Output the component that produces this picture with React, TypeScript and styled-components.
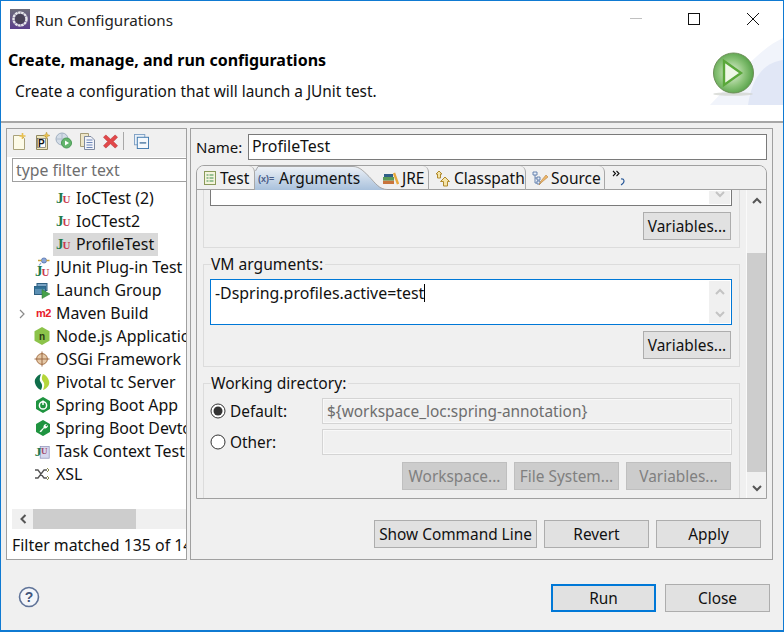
import React from 'react';
import styled, { createGlobalStyle } from 'styled-components';

const Global = createGlobalStyle`
  html, body { margin: 0; padding: 0; background: #f0f0f0; }
  * { box-sizing: border-box; }
`;

const Win = styled.div`
  width: 784px; height: 632px; overflow: hidden; display: flex; flex-direction: column;
  border: 1px solid #0f7ad2; border-bottom-width: 2px; background: #f0f0f0;
  font-family: "Noto Sans", "Open Sans", sans-serif; font-size: 15px; color: #111;
`;
const TitleBar = styled.div`
  height: 30px; flex: none; background: #fff; display: flex; align-items: center; padding: 6px 0 0 9px;
`;
const TitleText = styled.div`margin: 2px 0 0 5px; flex: 1; line-height: 20px; color: #222; font-size: 15.2px;`;
const WinControls = styled.div`display: flex; align-items: center; padding-right: 24px; gap: 46px;`;
const CloseGlyph = styled.svg`margin-left: 1px;`;
const Banner = styled.div`
  height: 92px; flex: none; background: #fff; border-bottom: 2px solid #a6a6a6; position: relative; padding: 0 0 0 7px;
`;
const BannerTitle = styled.div`font-weight: 700; font-size: 16px; line-height: 20px; margin-top: 19px; color: #000;`;
const BannerSub = styled.div`margin: 12px 0 0 7px; line-height: 20px; color: #111; font-size: 15.4px;`;
const BannerArt = styled.svg`position: absolute; right: 0; top: 6px;`;

const Body = styled.div`
  height: 437px; flex: none; display: flex; padding: 5px 10px 0 5px; gap: 3px;
`;
const Left = styled.div`
  width: 181px; flex: none; border: 1px solid #a0a0a0; background: #fff; display: flex; flex-direction: column; overflow: hidden;
`;
const Toolbar = styled.div`
  height: 28px; flex: none; background: #f0f0f0; display: flex; align-items: center; padding: 0 0 4px 5px;
`;
const ToolSlot = styled.span<{ $ml: number }>`display: inline-flex; flex: none; margin-left: ${p => p.$ml}px;`;
const ToolSep = styled.div`width: 1px; height: 18px; background: #a8a8a8; margin-left: 5px;`;
const FilterInput = styled.div`
  height: 24px; flex: none; margin: 1px -2px 0 5px; border: 1px solid #a0a0a0; background: #fff; color: #6e6e6e; padding-left: 3px; line-height: 23px; font-size: 15.8px;
`;
const Tree = styled.div`flex: 1; padding-top: 5px; min-height: 0; font-size: 15.9px;`;
const Row = styled.div<{ $level: number; $sel?: boolean }>`
  height: 23px; display: flex; align-items: center; white-space: nowrap; overflow: hidden; position: relative;
  padding: 0 0 2px ${p => (p.$level === 2 ? 46 : 26)}px; gap: 5px;
  ${p => (p.$sel ? 'margin-right: 28px; background: linear-gradient(90deg, #fff 46px, #d9d9d9 46px);' : '')}
`;
const IconBox = styled.span`width: 18px; height: 18px; flex: none; display: inline-flex; align-items: center; justify-content: center;`;
const Twist = styled.svg`position: absolute; left: 11px; top: 7px;`;
const HScroll = styled.div`
  height: 20px; flex: none; margin-left: 5px; background: #f0f0f0; display: flex; align-items: center;
`;
const HArrow = styled.div`width: 21px; height: 20px; display: flex; align-items: center; justify-content: center;`;
const HThumb = styled.div`width: 103px; height: 20px; background: #cdcdcd;`;
const FilterCount = styled.div`height: 30px; flex: none; padding: 6px 0 0 5px; white-space: nowrap; line-height: 21px; font-size: 15.9px;`;

const Right = styled.div`
  flex: 1; min-width: 0; border: 1px solid #a0a0a0; background: #f0f0f0; display: flex; flex-direction: column; padding: 0 5px 0 5px;
`;
const NameRow = styled.div`display: flex; align-items: center; height: 26px; margin-top: 5px; flex: none;`;
const NameLabel = styled.div`width: 52px; flex: none;`;
const NameInput = styled.div`flex: 1; height: 26px; border: 1px solid #7a7a7a; background: #fff; padding-left: 3px; line-height: 23px; font-size: 15.9px;`;
const Folder = styled.div`
  margin-top: 5px; height: 334px; flex: none; border: 1px solid #a0a0a0; border-radius: 8px 8px 0 0; display: flex; flex-direction: column; overflow: hidden; background: #f0f0f0;
`;
const TabBar = styled.div`
  height: 24px; flex: none; display: flex; border-bottom: 1px solid #a0a0a0; background: #f0f0f0; position: relative; font-size: 15.5px;
`;
const Tab = styled.div<{ $w: number; $pl?: number; $ml?: number }>`
  width: ${p => p.$w}px; flex: none; display: flex; align-items: center; gap: 3px; padding: 0 0 0 ${p => p.$pl ?? 6}px; white-space: nowrap; height: 24px;
  margin-left: ${p => p.$ml ?? 0}px;
  border-right: 1px solid #a8a8a8; border-top-right-radius: 6px;
`;
const ActiveWrap = styled.div`width: 132px; height: 24px; flex: none; position: relative;`;
const ActiveTab = styled.div`
  width: 132px; display: flex; align-items: center; gap: 3px; padding: 0 0 0 3px; height: 24px; white-space: nowrap;
  background: linear-gradient(180deg, #eef2f7 0%, #a9c1dc 100%);
  clip-path: polygon(0 3px, 3px 0, 98px 0, 104px 2px, 112px 8px, 118px 15px, 125px 21px, 132px 24px, 0 24px);
`;
const ActiveEdge = styled.svg`position: absolute; left: 0; top: 0;`;
const ChevronMore = styled.div`margin-left: 7px; padding-top: 3px;`;
const FolderBody = styled.div`flex: 1; min-height: 0; display: flex; overflow: hidden;`;
const Scrolled = styled.div`flex: 1; min-width: 0; padding: 0 6px 0 6px; overflow: hidden; font-size: 15.4px;`;
const VBar = styled.div`
  width: 20px; flex: none; display: flex; flex-direction: column; align-items: center; justify-content: space-between; background: #f0f0f0; border-left: 1px solid #fafafa;
`;
const VArrow = styled.div`height: 20px; display: flex; align-items: center; justify-content: center;`;
const VThumb = styled.div`width: 19px; height: 219px; background: #cdcdcd; margin-top: 43px; margin-bottom: 6px;`;

const Group = styled.div<{ $h: number; $clip?: boolean }>`
  height: ${p => p.$h}px; border: 1px solid #dcdcdc; position: relative; padding: 14px 7px 0 7px; margin-bottom: 16px;
  ${p => (p.$clip ? 'border-top: 0; padding-top: 0;' : '')}
`;
const Legend = styled.div`position: absolute; top: -10px; left: 7px; line-height: 19px; background: #f0f0f0; padding-right: 2px; font-size: 15.6px;`;
const TextArea = styled.div<{ $focus?: boolean; $h: number; $clip?: boolean }>`
  height: ${p => p.$h}px; background: #fff; border: 1px solid ${p => (p.$focus ? '#0078d7' : '#7a7a7a')}; ${p => (p.$clip ? 'border-top: 0;' : '')}
  display: flex; padding: 1px; margin-left: -1px;
`;
const TextValue = styled.div`flex: 1; padding: 1px 0 0 3px; line-height: 22px; font-size: 15.9px;`;
const Caret = styled.span`display: inline-block; width: 1px; height: 18px; background: #000; vertical-align: -3px;`;
const MiniBar = styled.div<{ $flat?: boolean }>`width: 21px; flex: none; background: #f0f0f0; display: flex; flex-direction: column; justify-content: space-between; align-items: center; padding: ${p => (p.$flat ? '0' : '7px 0 5px')};`;
const Btn = styled.div<{ $w: number; $dis?: boolean; $def?: boolean }>`
  width: ${p => p.$w}px; height: 28px; flex: none; text-align: center; line-height: ${p => (p.$def ? 26 : 28)}px; font-size: 15.4px;
  background: ${p => (p.$dis ? '#cccccc' : '#e1e1e1')};
  color: ${p => (p.$dis ? '#808080' : '#111')};
  border: ${p => (p.$def ? '2px solid #0078d7' : `1px solid ${p.$dis ? '#bfbfbf' : '#adadad'}`)};
`;
const BtnRow = styled.div<{ $top: number }>`display: flex; justify-content: flex-end; gap: 7px; margin: ${p => p.$top}px 1px 0 0;`;
const RadioRow = styled.div<{ $top: number }>`display: flex; align-items: center; height: 26px; margin-top: ${p => p.$top}px;`;
const RadioBox = styled.svg`flex: none; margin: 0 4px 0 -1px;`;
const RadioLabel = styled.div`width: 92px; flex: none;`;
const DisField = styled.div`flex: 1; height: 26px; background: #f0f0f0; border: 1px solid #d4d4d4; outline: 1px solid #f8f8f8; outline-offset: -2px; color: #6d6d6d; padding-left: 4px; line-height: 26px;`;
const Actions = styled.div`height: 28px; margin-top: 21px; display: flex; justify-content: flex-end; gap: 7px; padding-right: 6px;`;
const Footer = styled.div`flex: 1; display: flex; align-items: center; padding: 6px 13px 0 17px; gap: 9px;`;
const HelpIcon = styled.svg`margin-top: -2px;`;
const Spacer = styled.div`flex: 1;`;

const JU = () => (
  <svg width="18" height="18" viewBox="0 0 18 18">
    <text x="3" y="14" fontFamily="Liberation Serif" fontWeight="700" fontSize="15" fill="#1f7a4a">J</text>
    <text x="9.500" y="14" fontFamily="Liberation Serif" fontWeight="700" fontSize="11" fill="#c83a50">U</text>
  </svg>
);
const JUPlug = () => (
  <svg width="18" height="20" viewBox="0 0 18 20">
    <text x="2" y="18.500" fontFamily="Liberation Serif" fontWeight="700" fontSize="15" fill="#1f7a4a">J</text>
    <text x="8.500" y="18.500" fontFamily="Liberation Serif" fontWeight="700" fontSize="11" fill="#c83a50">U</text>
    <circle cx="11" cy="3.500" r="2.600" fill="#8aa6d8" stroke="#4a68a8" strokeWidth=".7" />
    <path d="M5 3.500h3.500M13.500 3.500h3" stroke="#c9a23a" strokeWidth="1.400" />
    <path d="M8 6l-2 2.500" stroke="#8aa6d8" strokeWidth="1.200" />
  </svg>
);
const LaunchIcon = () => (
  <svg width="18" height="18" viewBox="0 0 18 18">
    <rect x="4" y="2.500" width="10" height="7" fill="#7aa4c4" stroke="#2f5f80" />
    <rect x="1.500" y="5.500" width="11" height="8" fill="#5b8fb3" stroke="#2f5f80" />
    <rect x="1.500" y="5.500" width="11" height="2.400" fill="#2f6f94" />
    <path d="M9 8.500l8 4.500-8 4.500z" fill="#46a04a" stroke="#2f7a34" strokeWidth=".5" />
  </svg>
);
const M2 = () => (
  <svg width="18" height="16" viewBox="0 0 18 16">
    <text x="3" y="12" fontFamily="Liberation Sans" fontWeight="700" fontSize="11" fill="#e8202a" letterSpacing="-.5">m2</text>
  </svg>
);
const NodeIcon = () => (
  <svg width="18" height="20" viewBox="0 0 18 20">
    <path d="M9 1l7.500 4.300v9.400L9 19l-7.500-4.300V5.300z" fill="#8cc34a" />
    <text x="9" y="14" textAnchor="middle" fontFamily="Liberation Sans" fontWeight="700" fontSize="10" fill="#2b3a12">n</text>
  </svg>
);
const OsgiIcon = () => (
  <svg width="16" height="16" viewBox="0 0 16 16">
    <circle cx="8" cy="8" r="5.400" fill="#e5c9a8" stroke="#a8744a" />
    <path d="M8 .5v15M.5 8h15" stroke="#9c6a44" />
  </svg>
);
const PivotalIcon = () => (
  <svg width="16" height="18" viewBox="0 0 16 18">
    <path d="M7 1C2 3 0 7 1 10c.7 3 3 6 6 7 2-4 1-6-.5-8S6 4 7 1z" fill="#0f6e4a" />
    <path d="M9 17c5-2 7-6 6-9-.7-3-3-6-6-7-2 4-1 6 .5 8s.5 5-.5 8z" fill="#b5d63a" />
  </svg>
);
const SpringApp = () => (
  <svg width="18" height="18" viewBox="0 0 18 18">
    <path d="M10 2l6 3.500v7L10 16l-6-3.500v-7z" fill="#1f9440" stroke="#1f9440" strokeWidth="2" strokeLinejoin="round" />
    <circle cx="10" cy="9.400" r="3.600" fill="none" stroke="#fff" strokeWidth="1.500" />
    <path d="M10 4.500v4.500" stroke="#fff" strokeWidth="1.500" />
  </svg>
);
const SpringDev = () => (
  <svg width="18" height="18" viewBox="0 0 18 18">
    <path d="M10 2l6 3.500v7L10 16l-6-3.500v-7z" fill="#1f9440" stroke="#1f9440" strokeWidth="2" strokeLinejoin="round" />
    <path d="M6.500 12.500l4-4a3 3 0 0 1 3.500-3.500l-1.600 1.600 1 1L15 6a3 3 0 0 1-4 3.200l-3 4z" fill="#fff" />
  </svg>
);
const TaskIcon = () => (
  <svg width="20" height="20" viewBox="0 0 20 20">
    <rect x="8" y="5" width="10" height="13" fill="#d6d8ee" stroke="#8e90b8" strokeWidth=".8" />
    <text x="2" y="15" fontFamily="Liberation Serif" fontWeight="700" fontSize="15" fill="#1f7a4a">J</text>
    <text x="9" y="13" fontFamily="Liberation Serif" fontWeight="700" fontSize="10" fill="#a34a6a">U</text>
  </svg>
);
const XslIcon = () => (
  <svg width="16" height="16" viewBox="0 0 16 16" fill="none" stroke="#555" strokeWidth="1.300">
    <path d="M1 4h3l6 8h3M1 12h3l6-8h3" />
    <path d="M13 2l2 2-2 2M13 10l2 2-2 2" strokeWidth="1" stroke="#8a8a4a" />
  </svg>
);

const PageNew = () => (
  <svg width="16" height="18" viewBox="0 0 16 18">
    <path d="M1.500 3.500h8l3 3v11h-11z" fill="#fdfbe8" stroke="#a9a27a" />
    <path d="M10.500 1v6M7.500 4h6" stroke="#e8c050" strokeWidth="1.600" />
  </svg>
);
const PageP = () => (
  <svg width="16" height="18" viewBox="0 0 16 18">
    <path d="M1.500 3.500h8l3 3v11h-11z" fill="#efe7bb" stroke="#8f8860" />
    <rect x="2.500" y="6.500" width="8" height="9" fill="#fff" stroke="#555" strokeWidth=".6" />
    <text x="3" y="15" fontFamily="Liberation Sans" fontWeight="700" fontSize="10" fill="#111">P</text>
    <path d="M11.500 0l1 2.500 2.500 1-2.500 1-1 2.500-1-2.500L8 3.500l2.500-1z" fill="#e8c050" stroke="#a88a2c" strokeWidth=".4" />
  </svg>
);
const DupConfig = () => (
  <svg width="18" height="18" viewBox="0 0 18 18">
    <circle cx="7" cy="7" r="6" fill="#d3dce6" stroke="#a0afc0" />
    <path d="M7 1v12M1 7h12" stroke="#aebccb" />
    <circle cx="11.500" cy="11" r="5" fill="#63b56c" stroke="#4a9a55" />
    <path d="M10 8.500l4 2.500-4 2.500z" fill="#fff" />
  </svg>
);
const CopyDoc = () => (
  <svg width="17" height="17" viewBox="0 0 17 17">
    <path d="M1.500 .5h8v13h-8z" fill="#eee6c8" stroke="#a69d78" />
    <path d="M5.500 3.500h6.500l3.500 3.500v9.500H5.500z" fill="#f2f4fa" stroke="#7f8aa0" />
    <path d="M7.500 7h6M7.500 9.500h6M7.500 12h6M7.500 14.500h6" stroke="#6d86b8" />
  </svg>
);
const RedX = () => (
  <svg width="15" height="15" viewBox="0 0 16 16">
    <path d="M3 1l5 4.500L13 1l2.500 2.500L11 8l4.500 4.500L13 15l-5-4.500L3 15 .5 12.500 5 8 .5 3.500z" fill="#e2484a" stroke="#b83034" strokeWidth=".6" />
  </svg>
);
const Collapse = () => (
  <svg width="15" height="15" viewBox="0 0 16 16">
    <rect x=".5" y=".5" width="11" height="11" fill="#e8f0f8" stroke="#7fa0c4" />
    <rect x="3.500" y="3.500" width="12" height="12" fill="#f4f8fc" stroke="#3f78ad" />
    <path d="M6 9.500h7" stroke="#3f6f9c" strokeWidth="1.400" />
  </svg>
);
const Chev = ({ dir, color = '#c4c4c4', size = 10 }: { dir: 'up' | 'down'; color?: string; size?: number }) => (
  <svg width={size} height={size * 0.7} viewBox="0 0 10 7" fill="none" stroke={color} strokeWidth="2">
    <path d={dir === 'up' ? 'M1 6l4-4 4 4' : 'M1 1l4 4 4-4'} />
  </svg>
);

const rows: { t: string; l: number; i: React.ReactNode; s?: boolean; tw?: boolean }[] = [
  { t: 'IoCTest (2)', l: 2, i: <JU /> },
  { t: 'IoCTest2', l: 2, i: <JU /> },
  { t: 'ProfileTest', l: 2, i: <JU />, s: true },
  { t: 'JUnit Plug-in Test', l: 1, i: <JUPlug /> },
  { t: 'Launch Group', l: 1, i: <LaunchIcon /> },
  { t: 'Maven Build', l: 1, i: <M2 />, tw: true },
  { t: 'Node.js Application', l: 1, i: <NodeIcon /> },
  { t: 'OSGi Framework', l: 1, i: <OsgiIcon /> },
  { t: 'Pivotal tc Server', l: 1, i: <PivotalIcon /> },
  { t: 'Spring Boot App', l: 1, i: <SpringApp /> },
  { t: 'Spring Boot Devtools', l: 1, i: <SpringDev /> },
  { t: 'Task Context Test', l: 1, i: <TaskIcon /> },
  { t: 'XSL', l: 1, i: <XslIcon /> },
];

export default function App() {
  return (
    <Win>
      <Global />
      <TitleBar>
        <svg width="20" height="20" viewBox="0 0 20 20">
          <defs>
            <linearGradient id="ti" x1="0" y1="0" x2="0" y2="1">
              <stop offset="0" stopColor="#6d6d7a" />
              <stop offset="1" stopColor="#5b3f8c" />
            </linearGradient>
          </defs>
          <rect width="20" height="20" fill="url(#ti)" />
          <circle cx="10" cy="10" r="6.500" fill="none" stroke="#e6e6ea" strokeWidth="2.400" strokeDasharray="2.600 .5" />
          <circle cx="10" cy="10" r="5" fill="#4a4458" />
        </svg>
        <TitleText>Run Configurations</TitleText>
        <WinControls>
          <svg width="12" height="12" viewBox="0 0 12 12"><path d="M0 5.500h12" stroke="#c0c0c0" /></svg>
          <svg width="12" height="12" viewBox="0 0 12 12"><rect x=".5" y=".5" width="11" height="11" fill="none" stroke="#111" /></svg>
          <CloseGlyph width="12" height="12" viewBox="0 0 12 12"><path d="M0 0l12 12M12 0L0 12" stroke="#111" /></CloseGlyph>
        </WinControls>
      </TitleBar>
      <Banner>
        <BannerTitle>Create, manage, and run configurations</BannerTitle>
        <BannerSub>Create a configuration that will launch a JUnit test.</BannerSub>
        <BannerArt width="75" height="68" viewBox="0 0 75 68">
          <defs>
            <radialGradient id="g" cx=".45" cy=".5" r=".6">
              <stop offset="0" stopColor="#e8f2df" />
              <stop offset=".55" stopColor="#8cc47a" />
              <stop offset="1" stopColor="#4b9a3e" />
            </radialGradient>
          </defs>
          <path d="M2 68C25 45 50 12 75 1v67z" fill="#f1f4fb" />
          <path d="M40 68C45 35 60 25 75 23v45z" fill="#e1e7f6" />
          <ellipse cx="25" cy="57" rx="20" ry="1.800" fill="#cfd2cc" opacity=".7" />
          <circle cx="25.500" cy="36" r="20" fill="url(#g)" stroke="#6d8f58" />
          <path d="M16 24l17 12-17 12z" fill="#eef7e6" stroke="#5aa83a" strokeWidth="2.400" />
        </BannerArt>
      </Banner>
      <Body>
        <Left>
          <Toolbar>
            <ToolSlot $ml={0}><PageNew /></ToolSlot>
            <ToolSlot $ml={7}><PageP /></ToolSlot>
            <ToolSlot $ml={4}><DupConfig /></ToolSlot>
            <ToolSlot $ml={6}><CopyDoc /></ToolSlot>
            <ToolSlot $ml={7}><RedX /></ToolSlot>
            <ToolSep />
            <ToolSlot $ml={10}><Collapse /></ToolSlot>
          </Toolbar>
          <FilterInput>type filter text</FilterInput>
          <Tree>
            {rows.map(r => (
              <Row key={r.t} $level={r.l} $sel={r.s}>
                {r.tw && (
                  <Twist width="8" height="10" viewBox="0 0 8 10" fill="none" stroke="#8a8a8a" strokeWidth="1.200">
                    <path d="M2 1l4 4-4 4" />
                  </Twist>
                )}
                <IconBox>{r.i}</IconBox>
                <span>{r.t}</span>
              </Row>
            ))}
          </Tree>
          <HScroll>
            <HArrow>
              <svg width="8" height="10" viewBox="0 0 8 10" fill="none" stroke="#555" strokeWidth="2"><path d="M6.500 1l-4 4 4 4" /></svg>
            </HArrow>
            <HThumb />
          </HScroll>
          <FilterCount>Filter matched 135 of 146 items</FilterCount>
        </Left>
        <Right>
          <NameRow>
            <NameLabel>Name:</NameLabel>
            <NameInput>ProfileTest</NameInput>
          </NameRow>
          <Folder>
            <TabBar>
              <Tab $w={58} $pl={7}>
                <svg width="13" height="15" viewBox="0 0 13 15"><rect x=".5" y=".5" width="11" height="13" fill="#f4f4dc" stroke="#8a9a5a" /><path d="M2.500 4h2M2.500 7h2M2.500 10h2M5.500 4h4M5.500 7h4M5.500 10h4" stroke="#3f8f4f" /></svg>
                Test
              </Tab>
              <ActiveWrap>
                <ActiveTab>
                  <svg width="18" height="14" viewBox="0 0 18 14">
                    <text x="0" y="11" fontFamily="Liberation Sans" fontSize="9" fontWeight="700" fill="#4a5d88">(x)=</text>
                  </svg>
                  Arguments
                </ActiveTab>
                <ActiveEdge width="132" height="24" viewBox="0 0 132 24" fill="none" stroke="#a8a8a8">
                  <path d="M.5 5 3 .5h95c6 0 10 4 16 10s10 13 18 13" />
                </ActiveEdge>
              </ActiveWrap>
              <Tab $w={46} $pl={0} $ml={-4}>
                <svg width="16" height="15" viewBox="0 0 16 15"><rect x="0" y="9.500" width="11" height="3.500" fill="#c8743c" /><rect x="0" y="6" width="11" height="3.500" fill="#5a9a58" /><rect x="1" y="3" width="9" height="3" fill="#2f5f88" /><path d="M11 2l4 11" stroke="#e8a83c" strokeWidth="2.400" /></svg>
                <span>JRE</span>
              </Tab>
              <Tab $w={97}>
                <svg width="16" height="17" viewBox="0 0 16 17"><path d="M4 1l3 3H5.500v4h-3V4H1z" fill="#f6e5a8" stroke="#b08a2c" /><path d="M10 7l4.500 4.500H12.500V16h-4V11.500H5.500z" fill="#f6e5a8" stroke="#b08a2c" /></svg>
                Classpath
              </Tab>
              <Tab $w={79}>
                <svg width="16" height="17" viewBox="0 0 16 17"><path d="M1 2h4v3H1zM5 7h3v3H5zM5 11h3v3H5zM3 5v8h2M3 8h2" fill="#e8eef8" stroke="#5a78a8" strokeWidth=".9" /><path d="M7 15l2-4 5-6 2 2-6 5z" fill="#eeb86c" stroke="#b8823c" strokeWidth=".6" /></svg>
                Source
              </Tab>
              <ChevronMore>
                <svg width="16" height="18" viewBox="0 0 16 18" fill="none" stroke="#111" strokeWidth="1.100"><path d="M1 2l2.500 2.500L1 7M4.500 2l2.500 2.500L4.500 7" /><path d="M9 10c3-.5 5 3 0 6" stroke="#2a5a9a" /></svg>
              </ChevronMore>
            </TabBar>
            <FolderBody>
              <Scrolled>
                <Group $clip $h={58}>
                  <TextArea $clip $h={16}>
                    <TextValue />
                    <MiniBar $flat>
                      <Chev dir="down" />
                    </MiniBar>
                  </TextArea>
                  <BtnRow $top={6}><Btn $w={88}>Variables...</Btn></BtnRow>
                </Group>
                <Group $h={103}>
                  <Legend>VM arguments:</Legend>
                  <TextArea $focus $h={46}>
                    <TextValue>-Dspring.profiles.active=test<Caret /></TextValue>
                    <MiniBar>
                      <Chev dir="up" />
                      <Chev dir="down" />
                    </MiniBar>
                  </TextArea>
                  <BtnRow $top={6}><Btn $w={88}>Variables...</Btn></BtnRow>
                </Group>
                <Group $h={130}>
                  <Legend>Working directory:</Legend>
                  <RadioRow $top={0}>
                    <RadioBox width="16" height="16" viewBox="0 0 16 16"><circle cx="8" cy="8" r="7" fill="#fff" stroke="#333" /><circle cx="8" cy="8" r="4.500" fill="#333" /></RadioBox>
                    <RadioLabel>Default:</RadioLabel>
                    <DisField>$&#123;workspace_loc:spring-annotation&#125;</DisField>
                  </RadioRow>
                  <RadioRow $top={5}>
                    <RadioBox width="16" height="16" viewBox="0 0 16 16"><circle cx="8" cy="8" r="7" fill="#fff" stroke="#333" /></RadioBox>
                    <RadioLabel>Other:</RadioLabel>
                    <DisField />
                  </RadioRow>
                  <BtnRow $top={7}>
                    <Btn $dis $w={105}>Workspace...</Btn>
                    <Btn $dis $w={105}>File System...</Btn>
                    <Btn $dis $w={105}>Variables...</Btn>
                  </BtnRow>
                </Group>
              </Scrolled>
              <VBar>
                <VArrow><Chev dir="up" color="#555" /></VArrow>
                <VThumb />
                <VArrow><Chev dir="down" color="#555" /></VArrow>
              </VBar>
            </FolderBody>
          </Folder>
          <Actions>
            <Btn $w={163}>Show Command Line</Btn>
            <Btn $w={105}>Revert</Btn>
            <Btn $w={105}>Apply</Btn>
          </Actions>
        </Right>
      </Body>
      <Footer>
        <HelpIcon width="22" height="22" viewBox="0 0 22 22">
          <circle cx="11" cy="11" r="9.500" fill="#f4f6fa" stroke="#5f7398" strokeWidth="1.600" />
          <text x="11" y="16" textAnchor="middle" fontFamily="Liberation Sans" fontWeight="700" fontSize="14" fill="#43557c">?</text>
        </HelpIcon>
        <Spacer />
        <Btn $def $w={105}>Run</Btn>
        <Btn $w={105}>Close</Btn>
      </Footer>
    </Win>
  );
}
